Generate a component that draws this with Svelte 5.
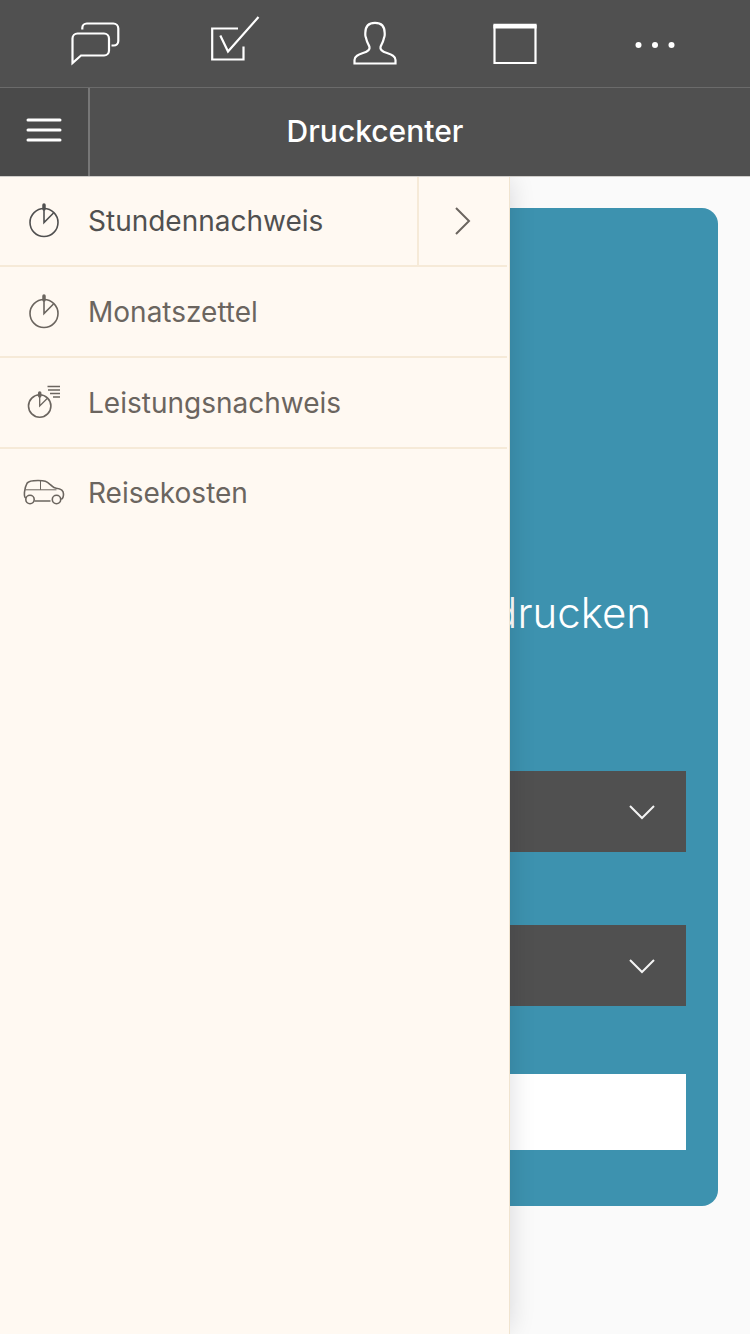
<script>
  const tabs = ['Nachrichten', 'Aufgaben', 'Kontakte', 'Kalender', 'Mehr'];
  const entries = [
    { label: 'Stundennachweis', icon: 'watch', active: true },
    { label: 'Monatszettel', icon: 'watch' },
    { label: 'Leistungsnachweis', icon: 'list' },
    { label: 'Reisekosten', icon: 'car' }
  ];
  const fields = ['Zeitraum', 'Format'];
  let open = $state(true);
</script>

<div class="page">
  <nav class="tabs">
    {#each tabs as tab, i}
      <button aria-label={tab}>
        <svg width="60" height="60" viewBox="0 0 60 60" fill="none" stroke="#fff" stroke-width="2.200">
          {#if i === 0}
            <path d="M7.500 49V24.500a5 5 0 0 1 5-5h26.500a5 5 0 0 1 5 5v12a5 5 0 0 1-5 5H16z" />
            <path d="M17.300 15.500v-1.500a4.500 4.500 0 0 1 4.500-4.500h26.500a5 5 0 0 1 5 5v12.500a4.500 4.500 0 0 1-4.500 4.500h-2.300" />
          {:else if i === 1}
            <path d="M33 14.500H7.200v31h31.300V32.500" />
            <path d="M15.300 21.500l7.700 16L53.500 3" />
          {:else if i === 2}
            <path d="M9.500 49.500v-3.500c0-4 4-5.500 8.500-7 5-1.500 7.200-3 6.500-6-.7-2.500-2.500-4.500-3.200-8-.4-2-1-2.500-1-4v-2C20.300 12 24 8.800 30 8.800s9.700 3.200 9.700 10.200v2c0 1.500-.6 2-1 4-.7 3.500-2.500 5.500-3.200 8-.7 3 1.500 4.500 6.500 6 4.500 1.500 8.500 3 8.500 7v3.500z" />
          {:else if i === 3}
            <path d="M9.500 11v38h41V11" /><path d="M8.400 12.200h43.200" stroke-width="4.800" />
          {:else}
            <g fill="#fff" stroke="none"><circle cx="13.500" cy="31" r="3" /><circle cx="30" cy="31" r="3" /><circle cx="46.500" cy="31" r="3" /></g>
          {/if}
        </svg>
      </button>
    {/each}
  </nav>

  <header>
    <button class="burger" aria-label="Menü" aria-expanded={open} onclick={() => (open = !open)}>
      <svg width="38" height="28" viewBox="0 0 38 28" stroke="#fff" stroke-width="3" stroke-linecap="round">
        <path d="M3 4h32M3 14h32M3 24h32" />
      </svg>
    </button>
    <h1>Druckcenter</h1>
  </header>

  <div class="body">
    <main>
      <form class="card" onsubmit={(e) => e.preventDefault()}>
        <h2>drucken</h2>
        {#each fields as field}
          <div class="field">
            <select aria-label={field}><option value=""></option></select>
            <svg width="28" height="18" viewBox="0 0 28 18" fill="none" stroke="#f4f4f4" stroke-width="2">
              <path d="M2 3l12 12L26 3" />
            </svg>
          </div>
        {/each}
        <button class="submit" aria-label="drucken"></button>
      </form>
    </main>

    {#if open}
      <aside>
        <ul>
          {#each entries as entry}
            <li class:active={entry.active}>
              <a href="#{entry.label}">
                <svg class="icon" width="44" height="44" viewBox="0 0 44 44" fill="none" stroke="currentColor" stroke-width="1.600">
                  {#if entry.icon === 'watch'}
                    <circle cx="22" cy="23.500" r="14" /><path d="M22 8.500v15l9.500-9.500" /><path d="M22 6V10" stroke-width="3.500" stroke-linecap="round" />
                  {:else if entry.icon === 'list'}
                    <circle cx="17.700" cy="25" r="11.200" /><path d="M17.700 13v12l7.500-7.500M25.500 5.500H38M26 9h12M28 12.500h10M31 16h7" stroke-width="1.300" /><path d="M17.700 12v3" stroke-width="3.500" stroke-linecap="round" />
                  {:else}
                    <g transform="translate(0 -4)">
                      <path d="M3.800 31c-1.800-.8-1.500-3-1.300-6 .4-4 1.500-7 2.500-8.700 1.500-2.200 5-2.800 11-2.800 7 0 8.500.5 12 3.800 3 2.700 3.500 3.700 6.200 4 4.500.4 7.300 2.200 7.300 5.700 0 3-.4 4.500-2.300 5.200M12.500 34h16" />
                      <path d="M3.500 22.800h31M18.500 13.500v9.300" stroke-width="1" />
                      <circle cx="8" cy="32.500" r="4.200" /><circle cx="34.500" cy="32.500" r="4.200" />
                    </g>
                  {/if}
                </svg>
                <span>{entry.label}</span>
              </a>
              {#if entry.active}
                <button class="more" aria-label="Stundennachweis öffnen">
                  <svg width="18" height="30" viewBox="0 0 18 30" fill="none" stroke="currentColor" stroke-width="2">
                    <path d="M2 2l13 13L2 28" />
                  </svg>
                </button>
              {/if}
            </li>
          {/each}
        </ul>
      </aside>
    {/if}
  </div>
</div>

<style>
  :global(body) { margin: 0; }
  .page {
    min-height: 100vh;
    display: flex;
    flex-direction: column;
    background: #fafafa;
    font-family: Inter, "Liberation Sans", sans-serif;
  }
  button { border: 0; padding: 0; margin: 0; background: none; color: inherit; }
  svg { display: block; }
  h1, h2, ul { margin: 0; padding: 0; }
  .tabs {
    display: flex;
    padding: 0 25px;
    height: 87px;
    background: #505050;
    border-bottom: 1px solid #6b6b6b;
  }
  .tabs button { flex: 1; display: grid; place-items: center; }
  header {
    position: relative;
    z-index: 1;
    display: grid;
    grid-template-columns: 90px 1fr 90px;
    height: 88px;
    background: #505050;
    box-shadow: 0 1px #cfcdca;
  }
  .burger {
    display: grid;
    place-items: center;
    padding-bottom: 4px;
    background: #4a4a4a;
    border-right: 2px solid #777;
  }
  h1 {
    color: #fff;
    font-size: 30px;
    line-height: 86px;
    font-weight: 500;
    text-align: center;
  }
  .body { position: relative; flex: 1; display: flex; flex-direction: column; }
  main { padding: 32px; }
  .card {
    padding: 372px 32px 56px;
    border-radius: 16px;
    background: #3d92af;
    display: flex;
    flex-direction: column;
  }
  h2 {
    padding-right: 35px;
    margin-bottom: 125px;
    color: #fff;
    font-size: 42px;
    line-height: 66px;
    font-weight: 300;
    text-align: right;
  }
  .field { display: grid; align-items: center; margin-bottom: 73px; }
  .field > * { grid-area: 1 / 1; }
  .field svg { justify-self: end; margin-right: 30px; pointer-events: none; }
  .field:last-of-type { margin-bottom: 68px; }
  select {
    appearance: none;
    width: 100%;
    height: 81px;
    border: 0;
    border-radius: 0;
    background: #505050;
    color: #fff;
    font: inherit;
  }
  .submit { height: 76px; background: #fff; }
  aside {
    position: absolute;
    inset: 0 auto 0 0;
    width: 68%;
    box-sizing: border-box;
    background: #fff9f2;
    border-right: 1px solid #f0e4d0;
    box-shadow: 4px 0 24px -4px rgba(0, 0, 30, 0.14);
    clip-path: inset(0 -40px 0 0);
  }
  ul { list-style: none; padding-right: 2px; }
  li {
    display: flex;
    height: 89px;
    border-bottom: 2px solid #f6ead8;
    color: #6b655f;
  }
  li:last-child { height: 88px; border-bottom: 0; }
  .active { color: #505050; }
  a {
    flex: 1;
    display: flex;
    align-items: center;
    gap: 22px;
    padding-left: 22px;
    color: inherit;
    text-decoration: none;
    font-size: 28px;
    line-height: 36px;
  }
  .more {
    width: 90px;
    display: grid;
    place-items: center;
    border-left: 2px solid #f6ead8;
    color: #6b655f;
  }
</style>
